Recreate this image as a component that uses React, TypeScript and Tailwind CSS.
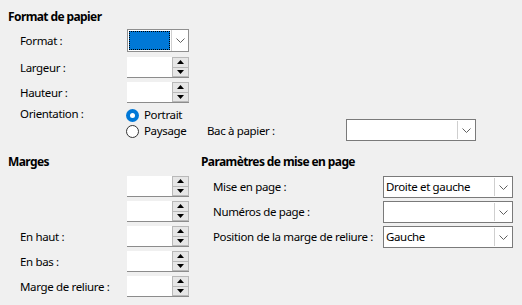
import React from "react";

function Chevron() {
  return (
    <svg width="9" height="5" viewBox="0 0 9 5" className="block">
      <polyline points="0.5,0.5 4.5,4.5 8.5,0.5" fill="none" stroke="#606060" strokeWidth="1" />
    </svg>
  );
}

function Spin() {
  return (
    <div className="flex w-[62px] h-[21px] bg-white border-b border-[#8c8c8c]">
      <div className="flex-1" />
      <div className="w-[17px] flex flex-col bg-[#f0f0f0]">
        <div className="flex-1 border border-[#b9b9b9] bg-[#e6e6e6] flex items-center justify-center">
          <svg width="7" height="4" viewBox="0 0 7 4" className="block">
            <polygon points="3.5,0 7,4 0,4" fill="#000" />
          </svg>
        </div>
        <div className="flex-1 border border-[#b9b9b9] border-t-0 bg-[#e6e6e6] flex items-center justify-center">
          <svg width="7" height="4" viewBox="0 0 7 4" className="block">
            <polygon points="0,0 7,0 3.5,4" fill="#000" />
          </svg>
        </div>
      </div>
    </div>
  );
}

function Combo({ value, h = "h-[22px]" }: { value?: string; h?: string }) {
  return (
    <div className={`flex w-[130px] ${h} bg-white border border-[#7a7a7a]`}>
      <div className="flex-1 pl-[2px] flex items-center leading-none">{value}</div>
      <div className="w-[17px] border-l border-[#cfcfcf] m-[1px] ml-0 flex items-center justify-center">
        <Chevron />
      </div>
    </div>
  );
}

function Radio({ checked }: { checked?: boolean }) {
  return checked ? (
    <div className="w-[13px] h-[13px] rounded-full bg-[#0078d7] flex items-center justify-center">
      <div className="w-[5px] h-[5px] rounded-full bg-white" />
    </div>
  ) : (
    <div className="w-[13px] h-[13px] rounded-full border border-[#333333] bg-white" />
  );
}

export default function App() {
  return (
    <div className="w-[522px] h-[305px] bg-[#f0f0f0] text-black text-[11.5px] whitespace-nowrap overflow-hidden font-['Noto_Sans','Liberation_Sans',sans-serif] tracking-[-0.35px]">
      <div className="pl-2 pt-[9px]">
        <div className="font-bold leading-4 h-4 text-[12px] tracking-[-0.6px]">Format de papier</div>
        <div className="pl-3 mt-[4px] flex flex-col">
          <div className="flex items-center h-[23px]">
            <div className="w-[107px]">Format :</div>
            <div className="flex w-[62px] h-[23px] bg-white border border-[#8f8f8f]">
              <div className="flex-1 m-[1px] bg-[#0078d7] border border-dotted border-black" />
              <div className="w-[17px] border-l border-[#cfcfcf] flex items-center justify-center">
                <Chevron />
              </div>
            </div>
          </div>
          <div className="flex items-center h-[21px] mt-[5px]">
            <div className="w-[107px]">Largeur :</div>
            <Spin />
          </div>
          <div className="flex items-center h-[21px] mt-[4px]">
            <div className="w-[107px]">Hauteur :</div>
            <Spin />
          </div>
          <div className="flex items-center h-4 mt-[4px]">
            <div className="w-[106px] -mt-[3px]">Orientation :</div>
            <Radio checked />
            <div className="ml-[5px]">Portrait</div>
          </div>
          <div className="flex items-center h-4 mt-0">
            <div className="w-[106px]" />
            <Radio />
            <div className="ml-[5px] w-[63px]">Paysage</div>
            <div className="w-[139px] -mt-[1px]">Bac à papier :</div>
            <div className="-mt-[2px]">
              <Combo />
            </div>
          </div>
        </div>
        <div className="flex mt-[15px]">
          <div className="w-[193px] flex flex-col">
            <div className="font-bold leading-4 h-4 text-[12px] tracking-[-0.6px]">Marges</div>
            <div className="pl-3 mt-[6px] flex flex-col gap-[4px]">
              <div className="flex items-center h-[21px]">
                <div className="w-[107px]" />
                <Spin />
              </div>
              <div className="flex items-center h-[21px]">
                <div className="w-[107px]" />
                <Spin />
              </div>
              <div className="flex items-center h-[21px]">
                <div className="w-[107px]">En haut :</div>
                <Spin />
              </div>
              <div className="flex items-center h-[21px]">
                <div className="w-[107px]">En bas :</div>
                <Spin />
              </div>
              <div className="flex items-center h-[21px]">
                <div className="w-[107px]">Marge de reliure :</div>
                <Spin />
              </div>
            </div>
          </div>
          <div className="flex flex-col">
            <div className="font-bold leading-4 h-4 text-[12px] tracking-[-0.6px]">Paramètres de mise en page</div>
            <div className="pl-3 mt-[6px] flex flex-col gap-[3px]">
              <div className="flex items-center h-[22px]">
                <div className="w-[170px]">Mise en page :</div>
                <Combo value="Droite et gauche" />
              </div>
              <div className="flex items-center h-[22px]">
                <div className="w-[170px]">Numéros de page :</div>
                <Combo />
              </div>
              <div className="flex items-center h-[22px]">
                <div className="w-[170px]">Position de la marge de reliure :</div>
                <Combo value="Gauche" />
              </div>
            </div>
          </div>
        </div>
      </div>
    </div>
  );
}
